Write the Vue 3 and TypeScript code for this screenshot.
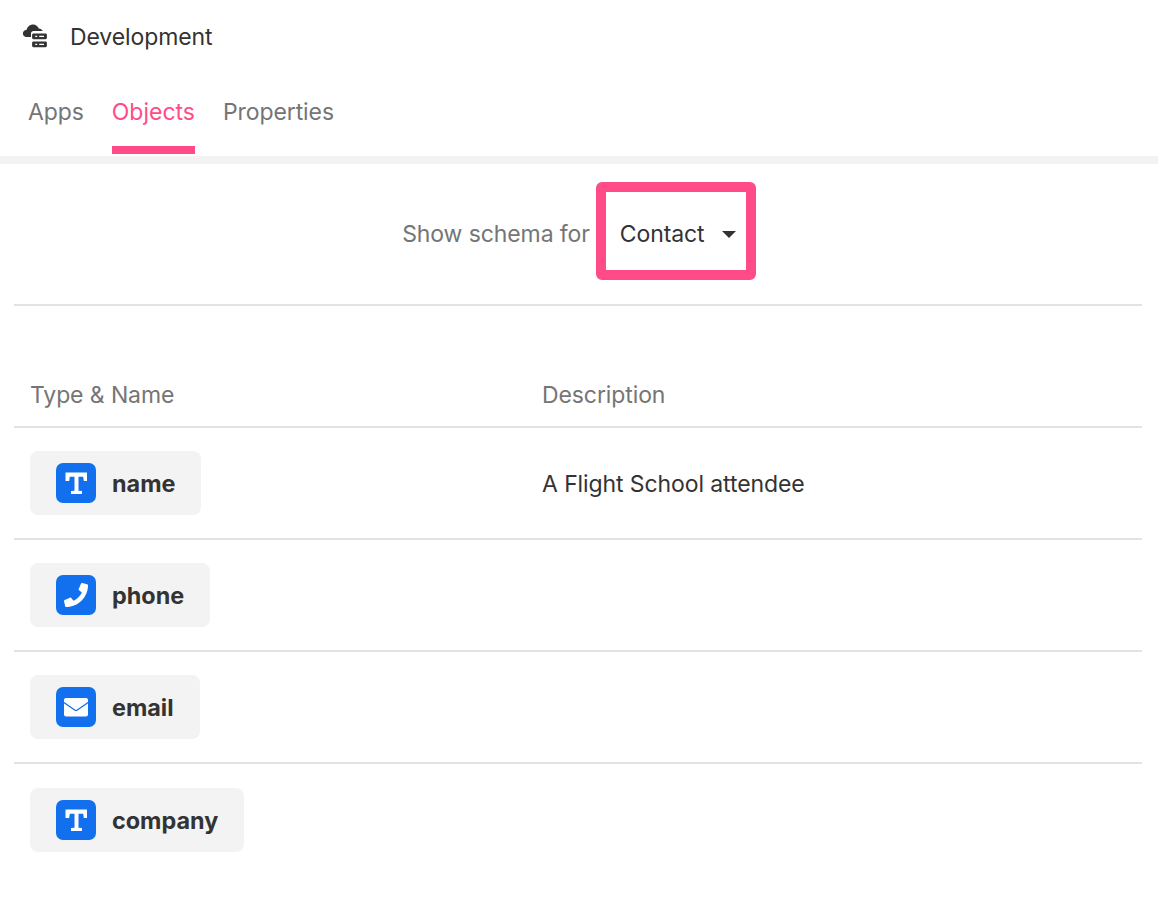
<script setup lang="ts">
interface Field { name: string; icon: 'text' | 'phone' | 'email'; description: string }
const tabs = ['Apps', 'Objects', 'Properties']
const fields: Field[] = [
  { name: 'name', icon: 'text', description: 'A Flight School attendee' },
  { name: 'phone', icon: 'phone', description: '' },
  { name: 'email', icon: 'email', description: '' },
  { name: 'company', icon: 'text', description: '' },
]
</script>

<template>
  <div class="page">
    <header class="title">
      <svg class="cloud" viewBox="0 0 26 26" width="26" height="26">
        <path fill="#333" d="M11 0.500c2.800 0 5 1.700 5.800 4.100 1.700.1 3.200 1.100 3.900 2.500H11.500c-1.400 0-2.500 1.100-2.500 2.500v3.500H4.500C2.500 13.100.9 11.500.9 9.500c0-1.700 1.200-3.100 2.700-3.500l1.100-.3C5.400 2.700 8 .5 11 .5z"/>
        <path fill="#333" fill-rule="evenodd" d="M11.500 9.500h12c.8 0 1.400.6 1.400 1.400v2.900c0 .8-.6 1.400-1.400 1.400h-12c-.8 0-1.400-.6-1.400-1.400v-2.900c0-.8.6-1.400 1.400-1.400zm1.700 2.200v1.400h2v-1.400zm4 0v1.400h4.800v-1.400zM11.500 17.500h12c.8 0 1.400.6 1.400 1.400v2.900c0 .8-.6 1.400-1.400 1.400h-12c-.8 0-1.400-.6-1.400-1.400v-2.900c0-.8.6-1.400 1.400-1.400zm1.700 2.200v1.400h2v-1.400zm4 0v1.400h4.800v-1.400z"/>
      </svg>
      <span>Development</span>
    </header>
    <nav class="tabs">
      <a v-for="tab in tabs" :key="tab" class="tab" :class="{ active: tab === 'Objects' }">{{ tab }}</a>
    </nav>
    <section class="content">
      <div class="picker">
        <span class="picker-label">Show schema for</span>
        <div class="select">
          <span>Contact</span>
          <i class="caret"></i>
        </div>
      </div>
      <div class="thead">
        <div class="col-name">Type &amp; Name</div>
        <div>Description</div>
      </div>
      <div v-for="field in fields" :key="field.name" class="row">
        <div class="col-name">
          <div class="chip">
            <span class="icon">
              <svg v-if="field.icon === 'text'" viewBox="0 0 40 40" width="40" height="40">
                <path fill="#fff" d="M9.500 9.500h21.500v8.500h-3.200l-.6-4.200h-4.700v13.900l3.500.3v3h-11v-3l3.500-.3V13.800h-4.700l-.6 4.200H9.500z"/>
              </svg>
              <svg v-else-if="field.icon === 'phone'" viewBox="0 0 40 40" width="40" height="40">
                <path fill="#fff" transform="translate(8 8) scale(0.046875)" d="M493.4 24.600l-104-24c-11.300-2.600-22.900 3.300-27.500 13.900l-48 112c-4.200 9.800-1.400 21.300 6.900 28l60.600 49.600c-36 76.700-98.900 140.500-177.200 177.200l-49.600-60.600c-6.800-8.300-18.200-11.100-28-6.900l-112 48C3.900 366.500-2 378.100.6 389.400l24 104C27.100 504.200 36.700 512 48 512c256.100 0 464-207.500 464-464 0-11.200-7.700-20.900-18.600-23.400z"/>
              </svg>
              <svg v-else viewBox="0 0 40 40" width="40" height="40">
                <rect x="8" y="11" width="24" height="18.500" rx="2" fill="#fff"/>
                <path d="M7.500 15.300L18.700 23c.8.500 1.800.5 2.600 0L32.500 15.300" fill="none" stroke="#126fee" stroke-width="1.300"/>
              </svg>
            </span>
            <span class="chip-name">{{ field.name }}</span>
          </div>
        </div>
        <div class="desc">{{ field.description }}</div>
      </div>
    </section>
  </div>
</template>

<style>
html, body { margin: 0; background: #fff; }
</style>

<style scoped>
.page {
  width: 1158px;
  height: 900px;
  overflow: hidden;
  background: #fff;
  color: #333;
  font-family: Inter, "Liberation Sans", Arial, sans-serif;
  font-size: 23px;
  letter-spacing: -0.1px;
}
.title {
  display: flex;
  align-items: center;
  gap: 22px;
  height: 74px;
  padding-left: 22px;
}
.cloud { flex: none; }
.tabs {
  display: flex;
  gap: 28px;
  height: 82px;
  padding-left: 28px;
  border-bottom: 8px solid #f3f3f3;
}
.tab {
  display: block;
  box-sizing: border-box;
  height: 80px;
  line-height: 76px;
  color: #757575;
  border-bottom: 8px solid transparent;
}
.tab.active { color: #ff4b87; border-bottom-color: #ff4b87; letter-spacing: 0; }
.content { padding: 0 16px 0 14px; }
.picker {
  display: flex;
  align-items: flex-start;
  justify-content: center;
  box-sizing: border-box;
  height: 142px;
  padding-top: 18px;
  padding-left: 2px;
  border-bottom: 2px solid #e3e3e3;
  gap: 6px;
}
.picker-label { color: #757575; line-height: 104px; }
.select {
  display: flex;
  align-items: center;
  box-sizing: border-box;
  width: 160px;
  height: 98px;
  padding-left: 14px;
  padding-top: 6px;
  border: 10px solid #ff4b87;
  border-radius: 6px;
}
.caret {
  margin-left: 17px;
  border-left: 7px solid transparent;
  border-right: 7px solid transparent;
  border-top: 7px solid #333;
}
.thead {
  display: flex;
  align-items: center;
  height: 58px;
  padding-bottom: 2px;
  margin-top: 60px;
  color: #757575;
  border-bottom: 2px solid #e3e3e3;
}
.col-name {
  width: 512px;
  padding-left: 16px;
  flex: none;
}
.row {
  display: flex;
  align-items: center;
  height: 110px;
  border-bottom: 2px solid #e3e3e3;
}
.row:last-child { border-bottom: 0; padding-top: 1px; }
.chip {
  display: inline-flex;
  align-items: center;
  height: 64px;
  gap: 16px;
  padding: 0 26px;
  background: #f3f3f3;
  border-radius: 8px;
  vertical-align: top;
}
.icon {
  display: block;
  width: 40px;
  height: 40px;
  background: #126fee;
  border-radius: 7px;
}
.icon svg { display: block; }
.chip-name {
  font-weight: 700;
  font-size: 23.4px;
  letter-spacing: 0;
}
.desc { padding-top: 2px; }
</style>
